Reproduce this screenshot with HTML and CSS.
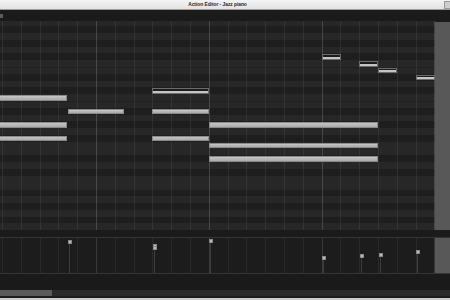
FILE: index.html
```html
<!DOCTYPE html>
<html lang="en">
<head>
<meta charset="utf-8">
<title>Action Editor - Jazz piano</title>
<link rel="stylesheet" href="styles.css">
</head>
<body>
<div class="window">
  <header class="titlebar">
    <span class="title">Action Editor - Jazz piano</span>
    <span class="winbtn"></span>
  </header>
  <div class="toolbar"><span class="tool"></span></div>
  <div class="editor">
    <div class="roll">
      <div class="note" style="left:-2px;top:74px;width:69px"></div>
      <div class="note" style="left:-2px;top:101.2px;width:69px"></div>
      <div class="note" style="left:-2px;top:114.8px;width:69px"></div>
      <div class="note" style="left:68px;top:87.6px;width:56px"></div>
      <div class="note sel" style="left:152px;top:67.2px;width:57px"></div>
      <div class="note" style="left:152px;top:87.6px;width:57px"></div>
      <div class="note" style="left:152px;top:114.8px;width:57px"></div>
      <div class="note" style="left:209px;top:101.2px;width:169px"></div>
      <div class="note" style="left:209px;top:121.6px;width:169px"></div>
      <div class="note" style="left:209px;top:135.2px;width:169px"></div>
      <div class="note sel" style="left:322px;top:33.2px;width:19px"></div>
      <div class="note sel" style="left:359px;top:40px;width:19px"></div>
      <div class="note sel" style="left:378px;top:46.8px;width:19px"></div>
      <div class="note sel" style="left:416px;top:53.6px;width:19px"></div>
    </div>
    <div class="vscroll"></div>
  </div>
  <div class="sep"></div>
  <div class="velocity">
    <div class="vel-area">
      <div class="stem" style="left:69px;top:2px"></div>
      <div class="stem" style="left:154px;top:6px"></div>
      <div class="stem" style="left:154px;top:8px"></div>
      <div class="stem" style="left:210px;top:0.5px"></div>
      <div class="stem" style="left:323px;top:17.5px"></div>
      <div class="stem" style="left:361px;top:15.5px"></div>
      <div class="stem" style="left:380px;top:14.5px"></div>
      <div class="stem" style="left:417px;top:12px"></div>
    </div>
    <div class="vscroll small"></div>
  </div>
  <div class="spacer"></div>
  <div class="hscroll"><div class="thumb"></div></div>
  <div class="gap"></div>
  <div class="frame-bottom"></div>
</div>
</body>
</html>
```
FILE: styles.css
```css
html, body {
  margin: 0;
  padding: 0;
  background: #1c1c1c;
  overflow: hidden;
}
.window {
  width: 450px;
  height: 300px;
  display: flex;
  flex-direction: column;
  font-family: "Liberation Sans", Arial, sans-serif;
  background: #1c1c1c;
}
.titlebar {
  height: 9px;
  flex: none;
  display: grid;
  grid-template-columns: 1fr 15px;
  align-items: center;
  background: linear-gradient(#f4f4f4, #e2e2e2);
  border-bottom: 1px solid #9c9c9c;
}
.title {
  justify-self: center;
  font-size: 4.8px;
  font-weight: bold;
  color: #222;
  line-height: 9px;
  white-space: nowrap;
}
.winbtn {
  justify-self: end;
  width: 5px;
  height: 6px;
  background: #cfcfcf;
  border: 1px solid #9a9a9a;
  border-right: none;
}
.toolbar {
  height: 11px;
  flex: none;
  background: #1b1b1b;
}
.tool {
  display: block;
  width: 2.5px;
  height: 3.5px;
  margin-top: 4px;
  background: #5c5c5c;
}
.editor {
  height: 209px;
  flex: none;
  display: flex;
}
.roll {
  flex: 1;
  position: relative;
  overflow: hidden;
  background-image:
    repeating-linear-gradient(90deg, transparent 0 96px, rgba(255,255,255,0.1) 96px 97px, transparent 97px 112.8px),
    repeating-linear-gradient(90deg, transparent 0 2px, rgba(255,255,255,0.065) 2px 3px, transparent 3px 18.8px),
    repeating-linear-gradient(180deg,
      #272727 0 5.3px,
      #1e1e1e 5.3px 12.1px,
      #272727 12.1px 18.9px,
      #1e1e1e 18.9px 25.7px,
      #272727 25.7px 32.5px,
      #1e1e1e 32.5px 39.3px,
      #272727 39.3px 46.1px,
      #202020 46.1px 46.9px,
      #272727 46.9px 52.9px,
      #1e1e1e 52.9px 59.7px,
      #272727 59.7px 66.5px,
      #1e1e1e 66.5px 73.3px,
      #272727 73.3px 80.1px,
      #202020 80.1px 80.9px,
      #272727 80.9px 81.6px);
}
.note {
  position: absolute;
  height: 5.5px;
  box-sizing: border-box;
  background: linear-gradient(#c6c6c6, #a9a9a9);
  border: 0.5px solid #8a8a8a;
}
.note.sel {
  background: linear-gradient(transparent 0 45%, #c4c4c4 45% 100%), #1c1c1c;
  border: 1px solid #6c6c6c;
}
.vscroll {
  width: 15px;
  flex: none;
  margin-top: 1px;
  background: #585858;
}
.vscroll.small {
  margin-top: 0;
}
.sep {
  height: 7px;
  flex: none;
  background: #1b1b1b;
}
.velocity {
  height: 35px;
  flex: none;
  display: flex;
  border-top: 1px solid #353535;
  border-bottom: 1px solid #353535;
}
.vel-area {
  flex: 1;
  position: relative;
  overflow: hidden;
  background-color: #1c1c1c;
  background-image:
    repeating-linear-gradient(90deg, transparent 0 96px, rgba(255,255,255,0.08) 96px 97px, transparent 97px 112.8px),
    repeating-linear-gradient(90deg, transparent 0 2px, rgba(255,255,255,0.06) 2px 3px, transparent 3px 18.8px);
}
.stem {
  position: absolute;
  bottom: 0;
  width: 1px;
  background: #3e3e3e;
}
.stem::before {
  content: "";
  position: absolute;
  left: -1.5px;
  top: 0;
  width: 4px;
  height: 4px;
  box-sizing: border-box;
  background: #bcbcbc;
  border: 0.5px solid #888;
}
.spacer {
  height: 16px;
  flex: none;
  background: #1a1a1a;
}
.hscroll {
  height: 6px;
  flex: none;
  background: #2b2b2b;
}
.thumb {
  width: 52px;
  height: 100%;
  background: #5a5a5a;
}
.gap {
  height: 2px;
  flex: none;
  background: #1b1b1b;
}
.frame-bottom {
  height: 2px;
  flex: none;
  background: #cdcdcd;
}
```
